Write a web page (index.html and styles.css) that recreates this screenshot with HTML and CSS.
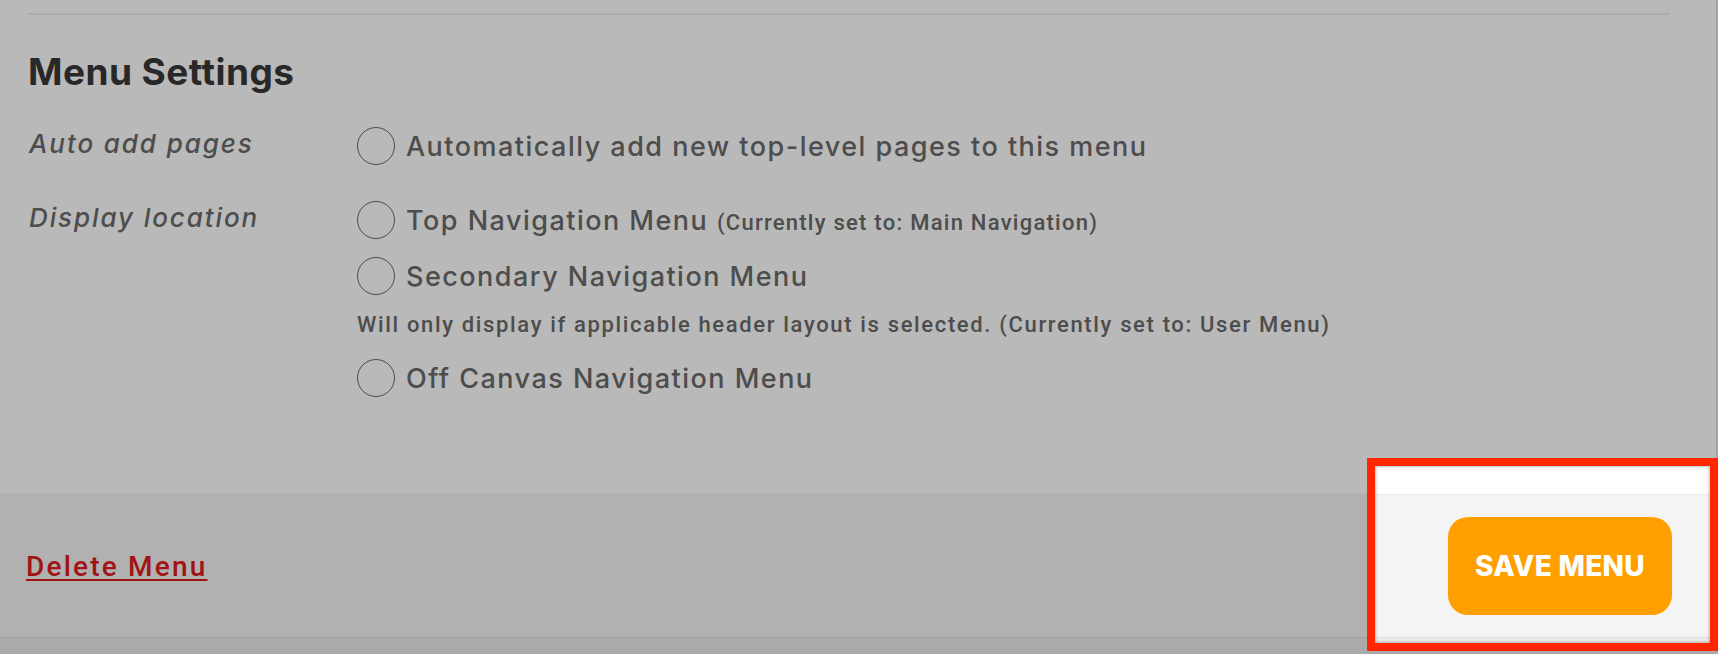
FILE: index.html
```html
<!DOCTYPE html>
<html lang="en">
<head>
<meta charset="utf-8">
<title>Menu Settings</title>
<link rel="stylesheet" href="styles.css">
</head>
<body>
<div class="panel">
  <section class="settings">
    <hr class="divider">
    <h3 class="title">Menu Settings</h3>
    <div class="field field-auto">
      <div class="label">Auto add pages</div>
      <div class="options">
        <label class="option"><span class="radio"></span><span class="opt-text">Automatically add new top-level pages to this menu</span></label>
      </div>
    </div>
    <div class="field field-location">
      <div class="label">Display location</div>
      <div class="options">
        <label class="option"><span class="radio"></span><span class="opt-text">Top Navigation Menu <span class="note">(Currently set to: Main Navigation)</span></span></label>
        <label class="option"><span class="radio"></span><span class="opt-text">Secondary Navigation Menu</span></label>
        <p class="hint">Will only display if applicable header layout is selected. (Currently set to: User Menu)</p>
        <label class="option"><span class="radio"></span><span class="opt-text">Off Canvas Navigation Menu</span></label>
      </div>
    </div>
  </section>
  <footer class="actions">
    <a class="delete" href="#">Delete Menu</a>
    <button class="save" type="button">SAVE MENU</button>
  </footer>
</div>
<div class="spotlight"></div>
</body>
</html>
```
FILE: styles.css
```css
html, body {
  margin: 0;
  padding: 0;
}
body {
  background: #ebebeb;
  font-family: "Inter", "Liberation Sans", sans-serif;
  color: #6a6a6a;
  height: 654px;
  overflow: hidden;
  position: relative;
}
.panel {
  width: 1716px;
  background: #ffffff;
  border-right: 1px solid #dcdcdc;
}
.settings {
  padding: 13px 0 96px 0;
}
.divider {
  border: 0;
  height: 2px;
  background: #eeeeee;
  margin: 0 46px 0 28px;
}
.title {
  margin: 35px 0 33px 28px;
  font-size: 37px;
  line-height: 43px;
  font-weight: 700;
  color: #383838;
  letter-spacing: 0.45px;
}
.field {
  display: grid;
  grid-template-columns: 328px 1fr;
  padding-left: 29px;
}
.field-auto {
  margin-bottom: 34px;
}
.label {
  font-style: italic;
  font-weight: 500;
  font-size: 26px;
  line-height: 36px;
  letter-spacing: 1.9px;
  color: #6a6a6a;
}
.options {
  display: flex;
  flex-direction: column;
  gap: 16px;
}
.option {
  display: flex;
  align-items: center;
  gap: 11px;
  height: 40px;
}
.radio {
  width: 36px;
  height: 36px;
  border: 1.6px solid #6a6a6a;
  border-radius: 50%;
  background: #fff;
  flex: none;
}
.opt-text {
  font-size: 27px;
  font-weight: 500;
  letter-spacing: 1.48px;
  color: #6a6a6a;
  white-space: nowrap;
}
.note {
  font-family: "Roboto", "Liberation Sans", sans-serif;
  font-size: 22px;
  font-weight: 500;
  letter-spacing: 1.25px;
}
.hint {
  margin: -1px 0 3px 0;
  font-family: "Roboto", "Liberation Sans", sans-serif;
  font-size: 22px;
  line-height: 28px;
  font-weight: 500;
  letter-spacing: 1.65px;
  color: #6a6a6a;
  white-space: nowrap;
}
.actions {
  height: 142px;
  background: #f4f4f4;
  border-top: 1px solid #ececec;
  border-bottom: 1px solid #dddddd;
  display: flex;
  align-items: center;
  justify-content: space-between;
  padding: 0 44px 0 26px;
}
.delete {
  font-family: "Roboto", "Liberation Sans", sans-serif;
  font-size: 28px;
  font-weight: 500;
  letter-spacing: 2.2px;
  color: #e01c1c;
  text-decoration: underline;
  text-decoration-thickness: 2px;
  text-underline-offset: 3px;
}
.save {
  width: 224px;
  height: 98px;
  border: 0;
  border-radius: 20px;
  background: #ffa000;
  color: #ffffff;
  font-family: "Inter", "Liberation Sans", sans-serif;
  font-weight: 800;
  font-size: 28px;
  letter-spacing: 0.3px;
  padding: 0;
}
.spotlight {
  position: absolute;
  left: 1367px;
  top: 458px;
  width: 351px;
  height: 193px;
  box-sizing: border-box;
  border: 8px solid #ff2600;
  box-shadow: 0 0 0 3000px rgba(0, 0, 0, 0.275), inset 0 0 3px 1px rgba(0, 0, 0, 0.25);
  pointer-events: none;
}
```
